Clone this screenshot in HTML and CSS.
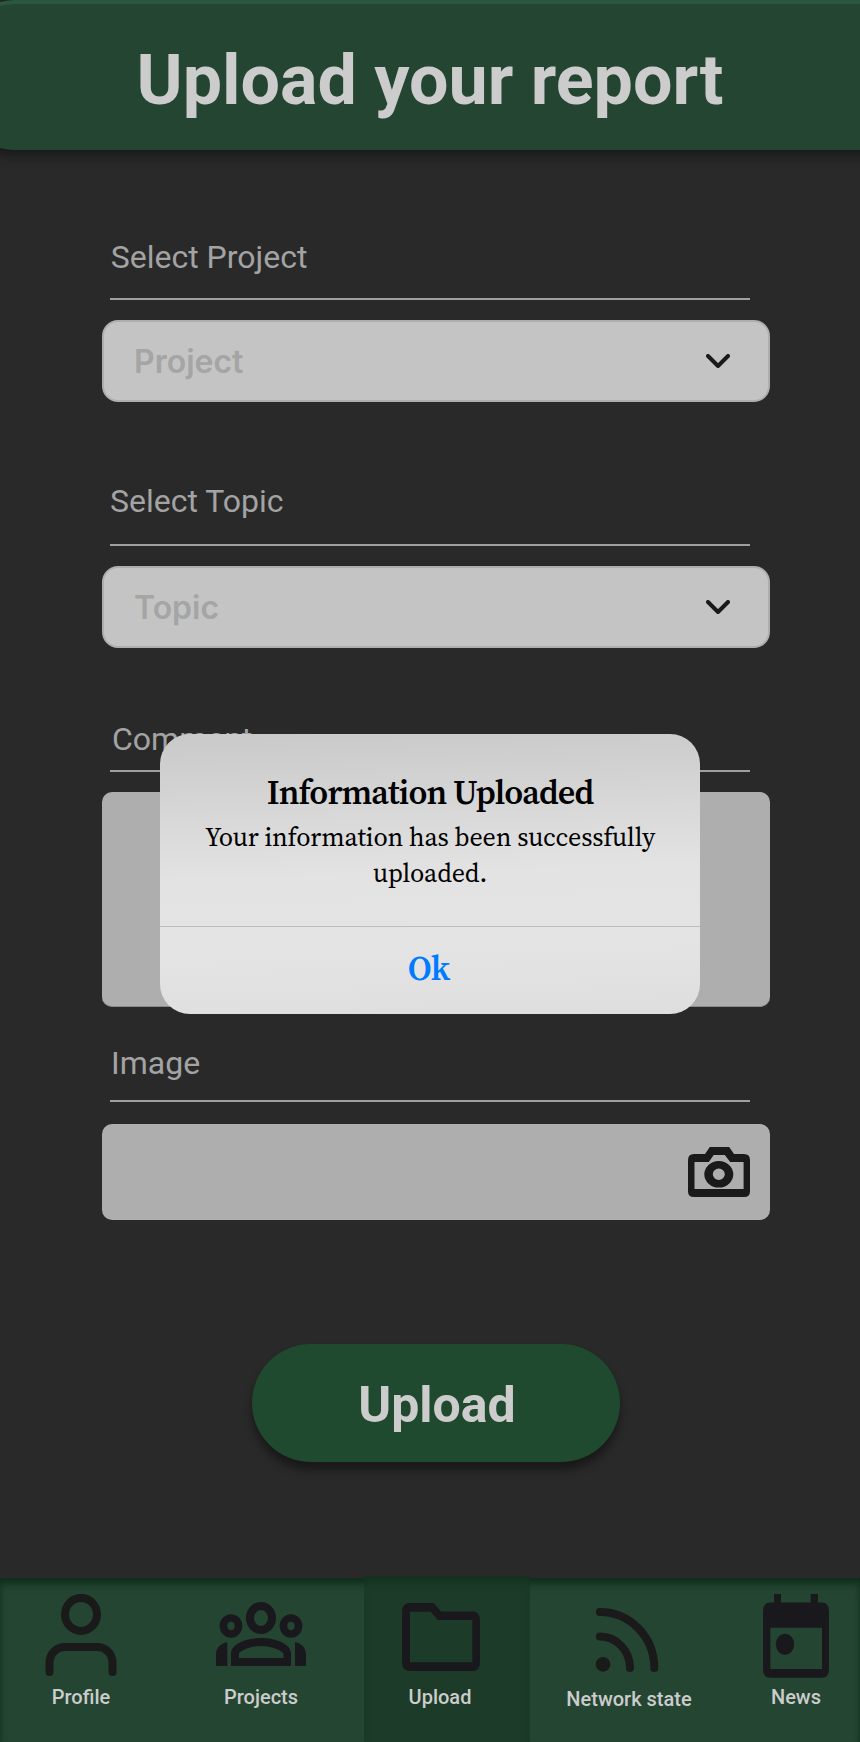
FILE: index.html
```html
<!DOCTYPE html>
<html lang="en">
<head>
<meta charset="utf-8">
<title>Upload your report</title>
<link rel="stylesheet" href="styles.css">
</head>
<body>
<div class="screen">
  <header class="header"><h1 class="header-title">Upload your report</h1></header>

  <main class="form">
    <section class="field field-project">
      <label class="label">Select Project</label>
      <hr class="rule">
      <div class="select">
        <span class="placeholder">Project</span>
        <svg class="chevron" viewBox="0 0 24 14"><path d="M2 2l10 10L22 2"/></svg>
      </div>
    </section>
    <section class="field field-topic">
      <label class="label">Select Topic</label>
      <hr class="rule">
      <div class="select">
        <span class="placeholder">Topic</span>
        <svg class="chevron" viewBox="0 0 24 14"><path d="M2 2l10 10L22 2"/></svg>
      </div>
    </section>
    <section class="field field-comment">
      <label class="label">Comment</label>
      <hr class="rule">
      <div class="comment-box"></div>
    </section>
    <section class="field field-image">
      <label class="label">Image</label>
      <hr class="rule">
      <div class="image-box">
        <svg class="camera" viewBox="688 1147 62 50"><path fill-rule="evenodd" d="M709.8 1147H729.2L734 1154H744Q750 1154 750 1160V1191.500Q750 1197 744 1197H694Q688 1197 688 1191.500V1160Q688 1154 694 1154H705ZM713.700 1155L708.800 1162H694.500V1189H743.600V1162H730.200L724.800 1155ZM704.300 1174.300A14.500 13.300 0 1 0 733.300 1174.300A14.500 13.300 0 1 0 704.300 1174.300ZM712.800 1174.300A6 5.700 0 1 1 724.800 1174.300A6 5.700 0 1 1 712.800 1174.300Z"/></svg>
      </div>
    </section>
    <button class="upload">Upload</button>
  </main>

  <nav class="nav">
    <a class="tab tab-profile">
      <svg class="icon icon-profile" viewBox="45 1594 72 82"><g fill="none" stroke="#1a1a1a" stroke-width="8" stroke-linecap="round"><ellipse cx="81" cy="1614.400" rx="16" ry="16.500"/><path d="M49.500 1672V1663C49.500 1654 56 1647 65 1647H97C106 1647 112.500 1654 112.500 1663V1672"/></g></svg>
      <span>Profile</span>
    </a>
    <a class="tab tab-projects">
      <svg class="icon icon-projects" viewBox="216 1602 90 64"><g fill="none" stroke="#19191d"><ellipse cx="261" cy="1618" rx="11" ry="12" stroke-width="8"/><ellipse cx="231" cy="1626" rx="7.500" ry="8" stroke-width="7.700"/><ellipse cx="291" cy="1626" rx="7.500" ry="8" stroke-width="7.700"/></g><path fill="#19191d" fill-rule="evenodd" d="M231 1666V1653.500C231 1644 246 1638 261 1638S291 1644 291 1653.500V1666ZM239 1658H283.500V1653.500C281 1650 271 1646 261 1646S241 1650 239 1653.500ZM216 1666V1655C216 1648 220 1643.500 227.300 1642.300V1666ZM306 1666V1655C306 1648 302 1643.500 295 1642.300V1666Z"/></svg>
      <span>Projects</span>
    </a>
    <a class="tab tab-upload">
      <svg class="icon icon-folder" viewBox="402 1603 78 68"><path fill="#19191d" fill-rule="evenodd" d="M410 1603H433.700L441 1611.500H472.500Q480 1611.500 480 1620V1662.500Q480 1671 472 1671H410Q402 1671 402 1662.500V1611.500Q402 1603 410 1603ZM410 1611.700V1662.300H472.300V1620H437.700L430.700 1611.700Z"/></svg>
      <span>Upload</span>
    </a>
    <a class="tab tab-network">
      <svg class="icon icon-rss" viewBox="595 1608 64 64"><g fill="none" stroke="#1a1a1a" stroke-width="8" stroke-linecap="round"><path d="M599.800 1612C630 1612 654.300 1637 654.300 1668M599.800 1636.500C616.500 1636.500 630 1650.500 630 1668"/></g><circle cx="603" cy="1664.400" r="7.300" fill="#1a1a1a"/></svg>
      <span>Network state</span>
    </a>
    <a class="tab tab-news">
      <svg class="icon icon-calendar" viewBox="763 1594 66 84"><path fill="#19191d" fill-rule="evenodd" d="M774 1594H781V1602.500H810.700V1594H818V1602.500H821.500Q829 1602.500 829 1611V1669.500Q829 1677.700 821.500 1677.700H770.500Q763 1677.700 763 1669.500V1611Q763 1602.500 770.500 1602.500H774ZM770.300 1627.700V1669H822V1627.700Z"/><ellipse cx="785" cy="1644.300" rx="9.200" ry="10.600" fill="#19191d"/></svg>
      <span>News</span>
    </a>
  </nav>

  <div class="dialog">
    <div class="dialog-body">
      <h2 class="dialog-title">Information Uploaded</h2>
      <p class="dialog-text">Your information has been successfully<br>uploaded.</p>
    </div>
    <button class="dialog-action">Ok</button>
  </div>
</div>
</body>
</html>
```

FILE: styles.css
```css
* { box-sizing: border-box; }
body { margin: 0; background: #292929; font-family: Roboto, sans-serif; }
h1, h2, p, hr { margin: 0; }
button { border: 0; padding: 0; font-family: inherit; }
svg { display: block; }

.screen {
  position: relative;
  display: flex;
  flex-direction: column;
  width: 860px;
  height: 1742px;
  overflow: hidden;
}

.header {
  flex: none;
  height: 150px;
  margin: 0 -60px 0 -46px;
  padding: 35px 60px 0 46px;
  border-top: 4px solid #2b573f;
  border-radius: 62px;
  background: #234532;
  box-shadow: 0 4px 12px 2px rgba(0, 0, 0, .4);
}
.header-title {
  font-size: 70px;
  line-height: 82px;
  font-weight: 700;
  text-align: center;
  color: #ccc;
}

.form {
  flex: 1;
  display: flex;
  flex-direction: column;
  padding: 87px 90px 0 102px;
}
.field { display: flex; flex-direction: column; }
.label {
  padding-left: 8px;
  font-size: 32px;
  line-height: 40px;
  color: #a3a3a3;
}
.rule {
  width: 640px;
  height: 2px;
  margin: 21px 0 20px 8px;
  border: 0;
  background: #a29da3;
}
.field-project .label { padding-left: 8.700px; }
.field-topic { margin-top: 79px; }
.field-topic .rule { margin-top: 23px; }
.field-comment { margin-top: 71px; }
.field-comment .rule { margin-top: 11px; }
.field-comment .label { padding-left: 10px; }
.field-image { margin-top: 36px; }
.field-image .label { padding-left: 9px; }
.field-image .rule { margin-top: 17px; margin-bottom: 22px; }

.select {
  display: flex;
  align-items: center;
  justify-content: space-between;
  height: 82px;
  padding: 0 38px 0 30px;
  border: 2px solid #aeaeae;
  border-radius: 16px;
  background: #c4c4c4;
}
.placeholder {
  padding-top: 2px;
  font: 600 32px/40px Inter, sans-serif;
  color: #a5a5a5;
}
.chevron {
  width: 24px;
  height: 14px;
  fill: none;
  stroke: #1a1a1a;
  stroke-width: 4;
  stroke-linecap: round;
  stroke-linejoin: round;
}
.comment-box {
  height: 215px;
  border-bottom: 1px solid #8b8b8b;
  border-radius: 10px;
  background: #aeaeae;
}
.image-box {
  display: flex;
  justify-content: flex-end;
  height: 96px;
  padding: 23px 20px 0 0;
  border-radius: 10px;
  background: #aeaeae;
}
.camera { width: 62px; height: 50px; fill: #1a1a1a; }

.upload {
  width: 368px;
  height: 118px;
  margin: 124px 0 0 150px;
  padding: 3px 0 0 2px;
  border-radius: 59px;
  background: #1f4a2f;
  box-shadow: 0 8px 8px rgba(0, 0, 0, .4);
  color: #ccc;
  font-size: 50px;
  font-weight: 700;
}

.nav {
  flex: none;
  display: grid;
  grid-template-columns: 162px 202px 166px 198px 132px;
  height: 164px;
  background: #234532;
  box-shadow: inset 0 8px 8px -2px rgba(0, 30, 10, .4), inset 0 4px 5px rgba(0, 30, 10, .3);
}
.tab {
  display: flex;
  flex-direction: column;
  align-items: center;
  justify-content: flex-end;
  padding-bottom: 33px;
  color: #ccc;
  font-size: 20px;
  line-height: 24px;
  font-weight: 500;
}
.tab-projects { padding-right: 4px; }
.tab-upload {
  margin-top: -2px;
  padding-right: 14px;
  background: #1c3b29;
  box-shadow: inset 0 10px 8px -4px rgba(0, 30, 10, .35);
}
.tab-network { padding-bottom: 31px; }
.tab-news { padding-left: 4px; }
.icon-profile { width: 72px; height: 82px; margin-bottom: 9px; }
.icon-projects { width: 90px; height: 64px; margin-bottom: 19px; }
.icon-folder { width: 78px; height: 68px; margin: 0 0 14px 2px; }
.icon-rss { width: 64px; height: 64px; margin: 0 4px 15px 0; }
.icon-calendar { width: 66px; height: 84px; margin-bottom: 7px; }

.dialog {
  position: absolute;
  left: 160px;
  top: 734px;
  width: 540px;
  height: 280px;
  display: flex;
  flex-direction: column;
  border-radius: 30px;
  overflow: hidden;
  background: linear-gradient(178deg, #c9c9c9 0%, #d2d2d2 18%, #e3e3e3 50%, #e4e4e4 75%, #dedede 100%);
  font-family: "Source Serif 4", "Source Serif Pro", "Noto Serif CJK SC", "Noto Serif CJK JP", "Liberation Serif", serif;
  color: #000;
  text-align: center;
}
.dialog-body {
  height: 193px;
  padding-top: 37px;
  border-bottom: 1px solid #bdbdbd;
}
.dialog-title {
  font-size: 34px;
  line-height: 42px;
  font-weight: 600;
  letter-spacing: -.880px;
}
.dialog-text {
  margin-top: 6px;
  font-size: 26px;
  line-height: 36px;
  letter-spacing: -.160px;
}
.dialog-action {
  flex: 1;
  padding: 0 3px 5px 0;
  background: transparent;
  color: #007aff;
  font-size: 34px;
  font-weight: 600;
  letter-spacing: -.880px;
}
```
